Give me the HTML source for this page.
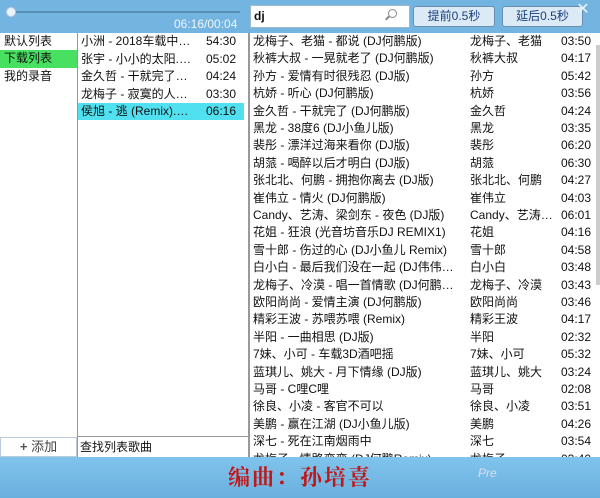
<!DOCTYPE html>
<html><head><meta charset="utf-8"><style>
*{margin:0;padding:0;box-sizing:border-box}
body{width:600px;height:498px;overflow:hidden;background:#fff;font:12px "Liberation Sans","Noto Sans CJK SC",sans-serif;color:#111;position:relative}
.top{position:absolute;left:0;top:0;width:600px;height:33px;background:#74b4e0}
.bot{position:absolute;left:0;top:457px;width:600px;height:41px;background:linear-gradient(#80c4ec,#6ab0de)}
.abs{position:absolute;white-space:nowrap}
.row{position:absolute;height:17px;line-height:17px;white-space:nowrap;font-size:12px}
</style></head><body>
<div class="top"></div>
<div class="abs" style="left:12px;top:11px;width:228px;height:2px;background:#5a8fb8"></div>
<div class="abs" style="left:6px;top:7px;width:10px;height:10px;border-radius:5px;background:#e8f3fa;border:1px solid #bcd"></div>
<div class="abs" style="left:174px;top:16px;color:#eef6ff;font-size:12px;line-height:16px">06:16/00:04</div>
<div class="abs" style="left:250px;top:5px;width:160px;height:23px;background:#fff;border:1px solid #9bc"></div>
<div class="abs" style="left:254px;top:9px;font-size:12px;font-weight:bold">dj</div>
<div class="abs" style="left:388px;top:9px;width:9px;height:9px;border:1.5px solid #888;border-radius:50%"></div>
<div class="abs" style="left:385px;top:17px;width:5px;height:2px;background:#888;transform:rotate(-45deg)"></div>
<div class="abs" style="left:413px;top:6px;width:82px;height:21px;background:#dceaf5;border:1px solid #6b8fb0;border-radius:3px;text-align:center;line-height:19px;color:#1a3f80">提前0.5秒</div>
<div class="abs" style="left:502px;top:6px;width:81px;height:21px;background:#dceaf5;border:1px solid #6b8fb0;border-radius:3px;text-align:center;line-height:19px;color:#1a3f80">延后0.5秒</div>
<div class="abs" style="left:566px;top:0;width:34px;height:20px;color:#e8f4ff;font-size:16px;text-align:center;line-height:20px">✕</div>

<div class="abs" style="left:77px;top:33px;width:1px;height:424px;background:#999"></div>
<div class="abs" style="left:248px;top:33px;width:2px;height:424px;background:#999"></div>
<div class="abs" style="left:78px;top:436px;width:170px;height:1px;background:#999"></div>
<div class="abs" style="left:0;top:437px;width:77px;height:20px;border:1px solid #bcd;text-align:center;line-height:18px;color:#444;font-size:13px"><b style="color:#555">+</b> 添加</div>
<div class="abs" style="left:80px;top:437px;line-height:20px">查找列表歌曲</div>
<div class="abs" style="left:596px;top:45px;width:4px;height:240px;background:#ccc"></div>

<div class="row" style="left:0;top:33px;width:77px;padding-left:4px">默认列表</div>
<div class="row" style="left:0;top:50px;width:77px;height:18px;padding-left:4px;background:#48e060">下载列表</div>
<div class="row" style="left:0;top:68px;width:77px;padding-left:4px">我的录音</div>

<div class="row" style="left:78px;top:33px;width:166px;padding-left:3px">小洲 - 2018车载中…<span style="position:absolute;left:128px">54:30</span></div>
<div class="row" style="left:78px;top:50.5px;width:166px;padding-left:3px">张宇 - 小小的太阳.…<span style="position:absolute;left:128px">05:02</span></div>
<div class="row" style="left:78px;top:68px;width:166px;padding-left:3px">金久哲 - 干就完了…<span style="position:absolute;left:128px">04:24</span></div>
<div class="row" style="left:78px;top:85.5px;width:166px;padding-left:3px">龙梅子 - 寂寞的人…<span style="position:absolute;left:128px">03:30</span></div>
<div class="row" style="left:78px;top:103px;width:166px;height:17px;padding-left:3px;background:#50e0f0">侯旭 - 逃 (Remix).…<span style="position:absolute;left:128px">06:16</span></div>

<div id="r"></div>
<script>
var d=[["龙梅子、老猫 - 都说 (DJ何鹏版)","龙梅子、老猫","03:50"],["秋裤大叔 - 一晃就老了 (DJ何鹏版)","秋裤大叔","04:17"],["孙方 - 爱情有时很残忍 (DJ版)","孙方","05:42"],["杭娇 - 听心 (DJ何鹏版)","杭娇","03:56"],["金久哲 - 干就完了 (DJ何鹏版)","金久哲","04:24"],["黑龙 - 38度6 (DJ小鱼儿版)","黑龙","03:35"],["裴彤 - 漂洋过海来看你 (DJ版)","裴彤","06:20"],["胡蒎 - 喝醉以后才明白 (DJ版)","胡蒎","06:30"],["张北北、何鹏 - 拥抱你离去 (DJ版)","张北北、何鹏","04:27"],["崔伟立 - 情火 (DJ何鹏版)","崔伟立","04:03"],["Candy、艺涛、梁剑东 - 夜色 (DJ版)","Candy、艺涛…","06:01"],["花姐 - 狂浪 (光音坊音乐DJ REMIX1)","花姐","04:16"],["雪十郎 - 伤过的心 (DJ小鱼儿 Remix)","雪十郎","04:58"],["白小白 - 最后我们没在一起 (DJ伟伟…","白小白","03:48"],["龙梅子、冷漠 - 唱一首情歌 (DJ何鹏…","龙梅子、冷漠","03:43"],["欧阳尚尚 - 爱情主演 (DJ何鹏版)","欧阳尚尚","03:46"],["精彩王波 - 苏喂苏喂 (Remix)","精彩王波","04:17"],["半阳 - 一曲相思 (DJ版)","半阳","02:32"],["7妹、小可 - 车载3D酒吧摇","7妹、小可","05:32"],["蓝琪儿、姚大 - 月下情缘 (DJ版)","蓝琪儿、姚大","03:24"],["马哥 - C哩C哩","马哥","02:08"],["徐良、小凌 - 客官不可以","徐良、小凌","03:51"],["美鹏 - 赢在江湖 (DJ小鱼儿版)","美鹏","04:26"],["深七 - 死在江南烟雨中","深七","03:54"],["龙梅子 - 情路弯弯 (DJ何鹏Remix)","龙梅子","03:40"]];
var h="";for(var i=0;i<d.length;i++){var y=33+i*17.4;h+='<div class="row" style="left:253px;top:'+y+'px">'+d[i][0]+'</div><div class="row" style="left:470px;top:'+y+'px">'+d[i][1]+'</div><div class="row" style="left:561px;top:'+y+'px">'+d[i][2]+'</div>';}
document.getElementById("r").innerHTML=h;
</script>
<div class="bot"></div>
<div class="abs" style="left:200px;top:462px;width:200px;text-align:center;color:#c01818;font-size:22px;line-height:30px;font-family:'Noto Serif CJK SC',serif;font-weight:bold;letter-spacing:2px">编曲：孙培喜</div>
<div class="abs" style="left:478px;top:466px;color:#dde;font-size:12px;font-style:italic">Pre</div>
</body></html>
